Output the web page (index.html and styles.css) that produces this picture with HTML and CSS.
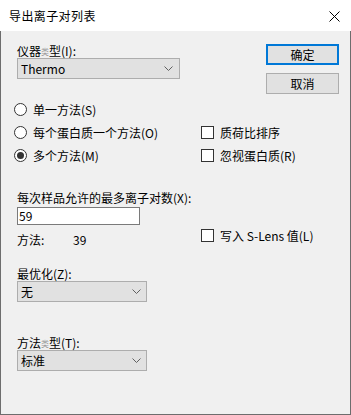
FILE: index.html
```html
<!DOCTYPE html>
<html lang="zh">
<head>
    <meta charset="UTF-8">
    <title>导出离子对列表</title>
    <link rel="stylesheet" href="styles.css">
</head>
<body>
    <div class="window">
        <div class="titlebar">
            <span class="title">导出离子对列表</span>
            <svg class="close" width="11" height="11" viewBox="0 0 11 11">
                <path d="M0.5 0.5 L10.5 10.5 M10.5 0.5 L0.5 10.5" stroke="#000" stroke-width="1" fill="none"/>
            </svg>
        </div>

        <div class="client">
            <div class="top">
                <div class="field">
                    <div class="label">仪器<span class="odd">类</span>型(I):</div>
                    <div class="select select-wide">
                        <span>Thermo</span>
                        <svg class="chevron" width="9" height="5" viewBox="0 0 9 5"><path d="M0.5 0.5 L4.5 4.5 L8.5 0.5" stroke="#606060" fill="none"/></svg>
                    </div>
                </div>
                <div class="buttons">
                    <div class="btn btn-default">确定</div>
                    <div class="btn">取消</div>
                </div>
            </div>

            <div class="options">
                <div class="radio"><span class="circle"></span>单一方法(S)</div>
                <div></div>
                <div class="radio"><span class="circle"></span>每个蛋白质一个方法(O)</div>
                <div class="check"><span class="box"></span>质荷比排序</div>
                <div class="radio"><span class="circle on"></span>多个方法(M)</div>
                <div class="check"><span class="box"></span>忽视蛋白质(R)</div>
            </div>

            <div class="pairs">
                <div class="pairs-left">
                    <div class="label">每次样品允许的最多离子对数(X):</div>
                    <div class="input">59</div>
                    <div class="info"><span class="info-key">方法:</span><span>39</span></div>
                </div>
                <div class="check slens"><span class="box"></span>写入 S-Lens 值(L)</div>
            </div>

            <div class="field field-opt">
                <div class="label">最优化(Z):</div>
                <div class="select">
                    <span>无</span>
                    <svg class="chevron" width="9" height="5" viewBox="0 0 9 5"><path d="M0.5 0.5 L4.5 4.5 L8.5 0.5" stroke="#606060" fill="none"/></svg>
                </div>
            </div>

            <div class="field field-type">
                <div class="label">方法<span class="odd">类</span>型(T):</div>
                <div class="select">
                    <span>标准</span>
                    <svg class="chevron" width="9" height="5" viewBox="0 0 9 5"><path d="M0.5 0.5 L4.5 4.5 L8.5 0.5" stroke="#606060" fill="none"/></svg>
                </div>
            </div>
        </div>
    </div>
</body>
</html>
```

FILE: styles.css
```css
body {
    margin: 0;
    font-family: "Noto Sans CJK SC", "Noto Sans", sans-serif;
    font-size: 12px;
    color: #000;
    background: #fff;
}

.window {
    width: 351px;
    height: 415px;
    display: flex;
    flex-direction: column;
}

.titlebar {
    height: 31px;
    flex: none;
    display: flex;
    align-items: center;
    justify-content: space-between;
    padding: 0 11px 0 9px;
    background: #fff;
}

.title {
    font-size: 12px;
    letter-spacing: 0.4px;
}

.close {
    display: block;
    margin-top: 1px;
}

.client {
    flex: 1;
    background: #f0f0f0;
    border: 1px solid #6d6d6d;
    border-top: none;
    padding: 12px 11px 0 16px;
}

.label {
    line-height: 15px;
    height: 15px;
    white-space: nowrap;
}

.odd {
    font-size: 8px;
    color: #9a9a9a;
    vertical-align: 1px;
}

.top {
    display: flex;
    justify-content: space-between;
}

.select {
    width: 130px;
    height: 21px;
    box-sizing: border-box;
    border: 1px solid #adadad;
    background: #e1e1e1;
    display: flex;
    align-items: center;
    justify-content: space-between;
    padding: 0 5px 0 3px;
}

.select-wide {
    width: 163px;
    padding-right: 6px;
}

.chevron {
    display: block;
}

.buttons {
    margin-top: 1px;
    display: flex;
    flex-direction: column;
    gap: 8px;
}

.btn {
    width: 73px;
    height: 21px;
    box-sizing: border-box;
    border: 1px solid #adadad;
    background: #e1e1e1;
    display: flex;
    align-items: center;
    justify-content: center;
    font-size: 12px;
}

.btn-default {
    border: 2px solid #0078d7;
}

.options {
    margin: 4px 0 0 -3px;
    display: grid;
    grid-template-columns: 187px 1fr;
    grid-auto-rows: 23px;
}

.radio, .check {
    display: flex;
    align-items: center;
    gap: 6px;
    white-space: nowrap;
}

.circle {
    width: 13px;
    height: 13px;
    box-sizing: border-box;
    border: 1px solid #333;
    border-radius: 50%;
    background: #fff;
    display: flex;
    align-items: center;
    justify-content: center;
}

.circle.on::after {
    content: "";
    width: 7px;
    height: 7px;
    border-radius: 50%;
    background: #333;
}

.box {
    width: 13px;
    height: 13px;
    box-sizing: border-box;
    border: 1px solid #333;
    background: #fff;
}

.pairs {
    margin-top: 23px;
    display: flex;
}

.pairs-left {
    width: 184px;
}

.input {
    margin-top: 2px;
    width: 123px;
    height: 18px;
    box-sizing: border-box;
    border: 1px solid #7a7a7a;
    background: #fff;
    padding-left: 1px;
    line-height: 16px;
}

.info {
    margin-top: 7px;
    line-height: 15px;
    display: flex;
}

.info-key {
    width: 56px;
}

.slens {
    margin-top: 38px;
    height: 15px;
}

.field-opt {
    margin-top: 19px;
}

.field-type {
    margin-top: 33px;
}
```
